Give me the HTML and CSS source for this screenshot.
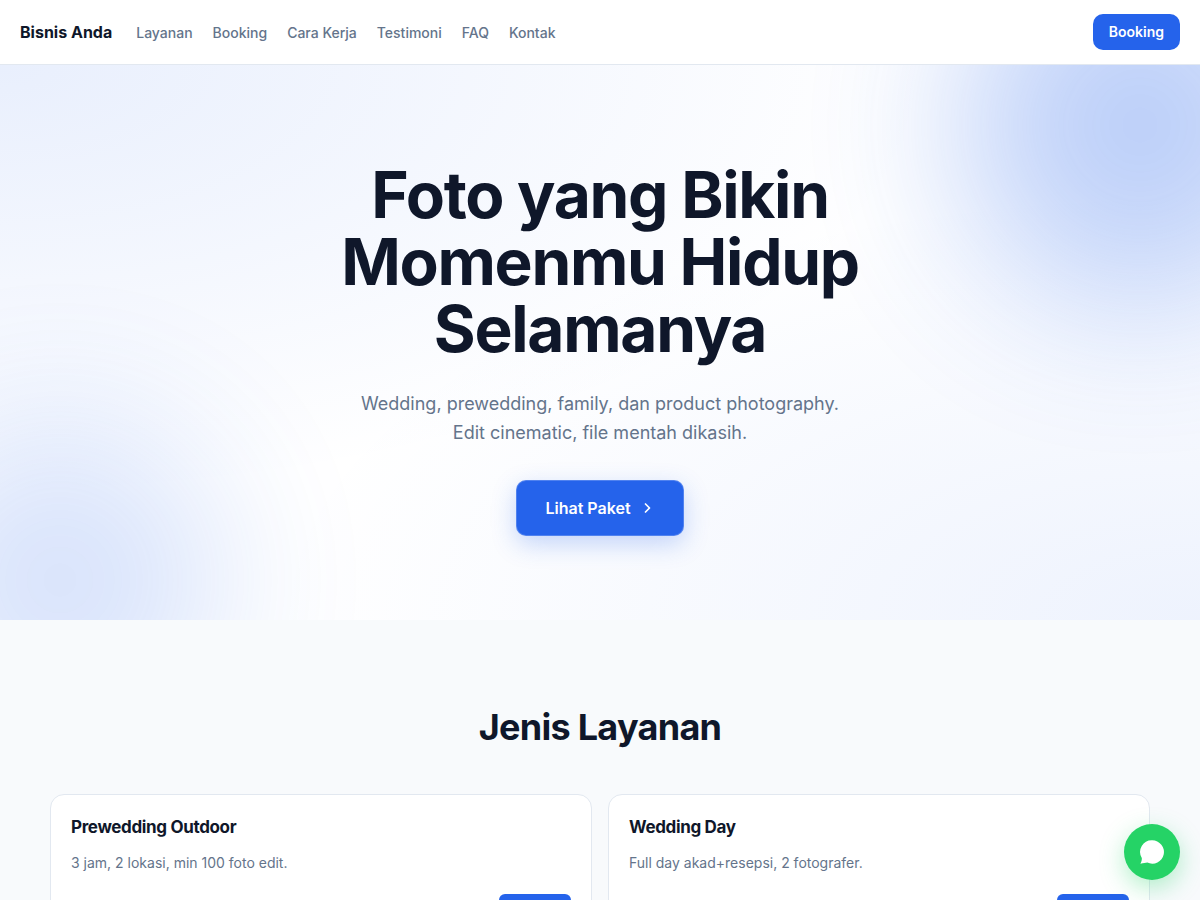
FILE: index.html
```
<!DOCTYPE html>
<html lang="id">
	<head>
		<meta charset="UTF-8">
		<meta name="viewport" content="width=device-width, initial-scale=1">
		<title>Bisnis Anda</title>
		<link rel="stylesheet" href="styles.css">
	</head>
	<body>
		<header class="site-header">
			<a class="brand" href="#">Bisnis Anda</a>
			<nav class="site-nav">
				<a href="#layanan">Layanan</a>
				<a href="#booking">Booking</a>
				<a href="#cara-kerja">Cara Kerja</a>
				<a href="#testimoni">Testimoni</a>
				<a href="#faq">FAQ</a>
				<a href="#kontak">Kontak</a>
			</nav>
			<a class="header-cta" href="#booking">Booking</a>
		</header>
		<main>
			<section class="hero">
				<div class="hero-inner">
					<h1>Foto yang Bikin Momenmu Hidup Selamanya</h1>
					<p>Wedding, prewedding, family, dan product photography. Edit cinematic, file mentah dikasih.</p>
					<a class="hero-cta" href="#layanan">
						Lihat Paket
						<svg width="16" height="16" viewBox="0 0 16 16" fill="none" stroke="currentColor" stroke-width="1.7" stroke-linecap="round" stroke-linejoin="round" aria-hidden="true">
							<path d="M6.500 4l4 4-4 4"/>
						</svg>
					</a>
				</div>
			</section>
			<section class="services" id="layanan">
				<h2>Jenis Layanan</h2>
				<div class="service-grid">
					<article class="service-card">
						<h3>Prewedding Outdoor</h3>
						<p>3 jam, 2 lokasi, min 100 foto edit.</p>
						<button class="service-button" type="button" aria-label="Booking Prewedding Outdoor"></button>
					</article>
					<article class="service-card">
						<h3>Wedding Day</h3>
						<p>Full day akad+resepsi, 2 fotografer.</p>
						<button class="service-button" type="button" aria-label="Booking Wedding Day"></button>
					</article>
				</div>
			</section>
		</main>
		<a class="chat-float" href="#kontak" aria-label="Chat">
			<svg width="28" height="28" viewBox="0 0 28 28" fill="currentColor" aria-hidden="true">
				<path d="M14.200 2.300a11.700 11.700 0 1 1-4.900 22.300c-1.700.1-3.700.8-6.900 1.200 1-2.200 1.600-4.100 1.400-5.800A11.700 11.700 0 0 1 14.200 2.300z"/>
			</svg>
		</a>
	</body>
</html>
```
FILE: styles.css
```
*, *::before, *::after {
	box-sizing: border-box;
}

body {
	margin: 0;
	background: #f8fafc;
	color: #0f172a;
	font-family: Inter, sans-serif;
	font-size: 16px;
	line-height: 1.6;
}

a {
	color: inherit;
	text-decoration: none;
}

h1, h2, h3, p {
	margin: 0;
}

/* header */
.site-header {
	display: flex;
	align-items: center;
	gap: 24px;
	padding: 14px 20px;
	background: #fff;
	border-bottom: 1px solid #e2e8f0;
}

.brand {
	font-weight: 700;
	line-height: 27px;
}

.site-nav {
	display: flex;
	flex-grow: 1;
	gap: 20px;
	color: #64748b;
	font-size: 14px;
	font-weight: 500;
	line-height: 23px;
}

.header-cta {
	padding: 0 16px;
	border-radius: 10px;
	background: #2563eb;
	color: #fff;
	font-size: 14px;
	font-weight: 600;
	line-height: 36px;
}

/* hero */
.hero {
	position: relative;
	overflow: hidden;
	padding: 96px 20px 84px;
	background:
		radial-gradient(ellipse at top left, rgba(37, 99, 235, 0.1), transparent 55%),
		radial-gradient(ellipse at bottom right, rgba(37, 99, 235, 0.08), transparent 55%),
		#fff;
	text-align: center;
}

.hero::before,
.hero::after {
	content: "";
	position: absolute;
	border-radius: 50%;
	background: #2563eb;
	filter: blur(80px);
}

.hero::before {
	top: -120px;
	right: -120px;
	width: 360px;
	height: 360px;
	opacity: 0.3;
}

.hero::after {
	bottom: -120px;
	left: -100px;
	width: 320px;
	height: 320px;
	opacity: 0.18;
}

.hero-inner {
	position: relative;
	z-index: 1;
	max-width: 640px;
	margin: 0 auto;
}

.hero h1 {
	font-size: 64px;
	font-weight: 700;
	line-height: 67px;
	letter-spacing: -0.02em;
}

.hero p {
	max-width: 500px;
	margin: 27px auto 33px;
	color: #64748b;
	font-size: 18px;
	line-height: 29px;
}

.hero-cta {
	display: inline-flex;
	align-items: center;
	gap: 8px;
	height: 56px;
	padding: 0 28px;
	border: 1px solid rgba(255, 255, 255, 0.2);
	border-radius: 10px;
	background: #2563eb;
	box-shadow: 0 8px 24px rgba(37, 99, 235, 0.25);
	color: #fff;
	font-weight: 600;
	line-height: 27px;
	vertical-align: top;
}

/* services */
.services {
	max-width: 1140px;
	margin: 0 auto;
	padding: 84px 20px;
}

.services h2 {
	margin-bottom: 44px;
	font-size: 36px;
	font-weight: 700;
	line-height: 46px;
	letter-spacing: -0.02em;
	text-align: center;
}

.service-grid {
	display: grid;
	grid-template-columns: repeat(2, 1fr);
	gap: 16px;
}

.service-card {
	display: flex;
	flex-direction: column;
	padding: 20px;
	border: 1px solid #e2e8f0;
	border-radius: 14px;
	background: #fff;
}

.service-card h3 {
	margin-bottom: 12px;
	font-size: 17px;
	font-weight: 700;
	line-height: 24px;
	letter-spacing: -0.02em;
}

.service-card p {
	margin-bottom: 20px;
	color: #64748b;
	font-size: 14px;
	line-height: 23px;
}

.service-button {
	align-self: flex-end;
	width: 72px;
	height: 32px;
	padding: 0;
	border: 0;
	border-radius: 6px;
	background: #2563eb;
}

/* floating chat button */
.chat-float {
	position: fixed;
	right: 20px;
	bottom: 20px;
	display: flex;
	align-items: center;
	justify-content: center;
	width: 56px;
	height: 56px;
	border-radius: 50%;
	background: #25d366;
	box-shadow: 0 8px 24px rgba(37, 211, 102, 0.35);
	color: #fff;
}

@media (max-width: 720px) {
	.site-nav {
		display: none;
	}

	.site-header {
		justify-content: space-between;
	}

	.hero h1 {
		font-size: 40px;
		line-height: 44px;
	}

	.service-grid {
		grid-template-columns: 1fr;
	}
}
```
